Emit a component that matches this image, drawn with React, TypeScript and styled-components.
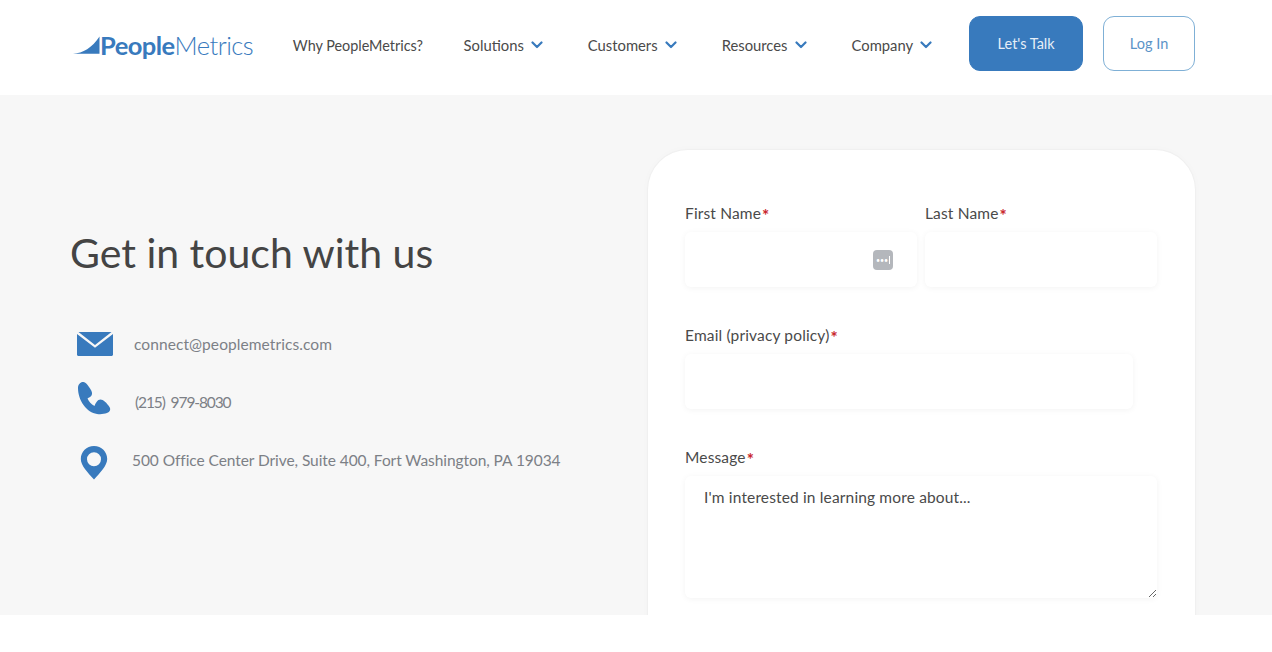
import React, { ReactElement } from 'react';
import styled, { createGlobalStyle } from 'styled-components';

const BLUE = '#387ABD';

const GlobalStyle = createGlobalStyle`
  html, body {
    margin: 0;
    padding: 0;
    background: #fff;
    font-family: 'Lato', 'Noto Sans', sans-serif;
  }
  * {
    box-sizing: border-box;
  }
`;

const navItems = [
  { label: 'Why PeopleMetrics?', hasMenu: false },
  { label: 'Solutions', hasMenu: true },
  { label: 'Customers', hasMenu: true },
  { label: 'Resources', hasMenu: true },
  { label: 'Company', hasMenu: true },
];

const LogoMark = (): ReactElement => (
  <svg width='28' height='20' viewBox='0 0 28 20'>
    <path d='M0 18.8C10 18 19 13 26.5 1.5V18.8Z' fill={BLUE} />
  </svg>
);

const Chevron = (): ReactElement => (
  <svg width='12' height='8' viewBox='0 0 12 8'>
    <path
      d='M1.5 1.5L6 6L10.5 1.5'
      fill='none'
      stroke={BLUE}
      strokeWidth='2.2'
      strokeLinecap='round'
      strokeLinejoin='round'
    />
  </svg>
);

const MailIcon = (): ReactElement => (
  <svg width='36' height='24' viewBox='0 0 36 24'>
    <path
      d='M1.5 0H34.5L18 13ZM0 2V22.5C0 23.4.7 24 1.5 24H34.5C35.3 24 36 23.4 36 22.5V2L18 15.8Z'
      fill={BLUE}
    />
  </svg>
);

const PhoneIcon = (): ReactElement => (
  <svg width='34' height='34' viewBox='0 0 34 34'>
    <path
      d='M1 7C1 3 4 .5 6.5 1C8.5 1.4 10 3 12 6C14.5 9.5 16 12 14.5 14.5C13.5 16 12 16.5 10.5 17.5C12 20.5 14 23 17.5 25C18.5 22 20.5 18.5 23.5 18.5C26 18.5 30 22 32.5 26C34 28.5 33 31 30 32C27 33 24 33.5 20 33C10 31.5 1 20 1 7Z'
      fill={BLUE}
    />
  </svg>
);

const PinIcon = (): ReactElement => (
  <svg width='28' height='34' viewBox='0 0 28 34'>
    <path
      fillRule='evenodd'
      d='M14 0C6.4 0 .8 5.8.8 13C.8 19.5 8 27 14 33.5C20 27 27.2 19.5 27.2 13C27.2 5.8 21.6 0 14 0ZM14 6.2A7 7 0 1 1 14 20.2A7 7 0 1 1 14 6.2Z'
      fill={BLUE}
    />
  </svg>
);

export default function App(): ReactElement {
  return (
    <Page>
      <GlobalStyle />
      <Header>
        <Logo>
          <LogoMark />
          <LogoBold>People</LogoBold>
          <LogoLight>Metrics</LogoLight>
        </Logo>
        <Nav>
          {navItems.map((item) => (
            <NavItem key={item.label} $hasMenu={item.hasMenu}>
              {item.label}
              {item.hasMenu && <Chevron />}
            </NavItem>
          ))}
        </Nav>
        <PrimaryButton>Let's Talk</PrimaryButton>
        <OutlineButton>Log In</OutlineButton>
      </Header>

      <Main>
        <ContactColumn>
          <Title>Get in touch with us</Title>
          <ContactList>
            <ContactRow>
              <IconSlot>
                <MailIcon />
              </IconSlot>
              <ContactText $indent={2} $spacing={0.08}>
                connect@peoplemetrics.com
              </ContactText>
            </ContactRow>
            <ContactRow>
              <IconSlot $up={8}>
                <PhoneIcon />
              </IconSlot>
              <ContactText $indent={3} $spacing={-1.1} $wordSpacing={3}>
                (215) 979-8030
              </ContactText>
            </ContactRow>
            <ContactRow>
              <IconSlot $left={3} $down={6}>
                <PinIcon />
              </IconSlot>
              <ContactText $spacing={-0.07}>
                500 Office Center Drive, Suite 400, Fort Washington, PA 19034
              </ContactText>
            </ContactRow>
          </ContactList>
        </ContactColumn>

        <FormCard>
          <NameRow>
            <Field>
              <Label>
                First Name<Required>*</Required>
              </Label>
              <InputBox>
                <PasswordBadge>
                  <span>•••</span>
                  <i />
                </PasswordBadge>
              </InputBox>
            </Field>
            <Field>
              <Label>
                Last Name<Required>*</Required>
              </Label>
              <InputBox />
            </Field>
          </NameRow>
          <Field>
            <Label>
              Email (privacy policy)<Required>*</Required>
            </Label>
            <InputBox $width={448} />
          </Field>
          <Field>
            <Label>
              Message<Required>*</Required>
            </Label>
            <MessageBox defaultValue="I'm interested in learning more about..." />
          </Field>
        </FormCard>
      </Main>
    </Page>
  );
}

const Page = styled.div`
  width: 1272px;
  height: 652px;
  overflow: hidden;
  background: #fff;
`;

const Header = styled.header`
  height: 95px;
  display: flex;
  align-items: center;
  padding: 0 77px 5px 73px;
  background: #fff;
`;

const Logo = styled.div`
  width: 220px;
  display: flex;
  align-items: baseline;
  font-size: 25.5px;
  line-height: 30px;
  letter-spacing: -0.55px;
  color: ${BLUE};

  svg {
    margin-right: -1px;
    flex: none;
    align-self: center;
  }
`;

const LogoBold = styled.span`
  font-weight: 700;
`;

const LogoLight = styled.span`
  font-weight: 300;
`;

const Nav = styled.nav`
  display: flex;
  align-items: center;
  gap: 45px;
  margin-right: 37px;
`;

const NavItem = styled.a<{ $hasMenu: boolean }>`
  display: flex;
  align-items: center;
  gap: ${(props) => (props.$hasMenu ? '7px' : '0')};
  margin-right: ${(props) => (props.$hasMenu ? '0' : '-4.5px')};
  font-size: ${(props) => (props.$hasMenu ? '14.8px' : '14.4px')};
  color: #4a4a4a;
  white-space: nowrap;
`;

const PrimaryButton = styled.button`
  width: 114px;
  height: 55px;
  margin: 0 20px 3px 0;
  border: 1px solid ${BLUE};
  border-radius: 11px;
  background: ${BLUE};
  color: #e6eef7;
  font: 400 14.5px 'Lato', sans-serif;
`;

const OutlineButton = styled.button`
  width: 92px;
  height: 55px;
  margin-bottom: 3px;
  border: 1px solid #7fb0d6;
  border-radius: 11px;
  background: #fff;
  color: #5b94c8;
  font: 400 14.5px 'Lato', sans-serif;
`;

const Main = styled.main`
  height: 520px;
  overflow: hidden;
  display: flex;
  justify-content: space-between;
  align-items: flex-start;
  padding: 55px 77px 0 70px;
  background: #f7f7f7;
`;

const ContactColumn = styled.section`
  padding-top: 78px;
`;

const Title = styled.h1`
  margin: 0 0 48px;
  font-size: 41px;
  line-height: 50px;
  font-weight: 400;
  color: #444;
`;

const ContactList = styled.div`
  display: flex;
  flex-direction: column;
  gap: 22px;
`;

const ContactRow = styled.div`
  display: flex;
  align-items: center;
  height: 36px;
`;

const IconSlot = styled.span<{ $left?: number; $up?: number; $down?: number }>`
  width: 62px;
  padding-left: ${(props) => 7 + (props.$left ?? 0)}px;
  margin-bottom: ${(props) => props.$up ?? 0}px;
  margin-top: ${(props) => props.$down ?? 0}px;
  display: flex;
  align-items: center;
  flex: none;
`;

const ContactText = styled.span<{
  $indent?: number;
  $spacing?: number;
  $wordSpacing?: number;
}>`
  margin-left: ${(props) => props.$indent ?? 0}px;
  font-size: 15.5px;
  letter-spacing: ${(props) => props.$spacing ?? 0}px;
  word-spacing: ${(props) => props.$wordSpacing ?? 0}px;
  color: #7c8086;
  white-space: nowrap;
`;

const FormCard = styled.section`
  width: 547px;
  height: 560px;
  flex: none;
  padding: 53px 37px 0;
  display: flex;
  flex-direction: column;
  gap: 38px;
  border-radius: 40px;
  background: #fff;
  box-shadow: 0 0 0 1px #f0f0f0, 0 0 8px rgba(0, 0, 0, 0.025);
`;

const NameRow = styled.div`
  display: grid;
  grid-template-columns: 232px 232px;
  gap: 8px;
`;

const Field = styled.div`
  display: flex;
  flex-direction: column;
`;

const Label = styled.label`
  height: 20px;
  margin-bottom: 9px;
  font-size: 15.5px;
  line-height: 20px;
  letter-spacing: 0.15px;
  color: #4a4a4a;
`;

const Required = styled.span`
  margin-left: 1px;
  color: #c9252c;
  font-size: 17px;
  font-weight: 700;
  line-height: 0;
  vertical-align: -3px;
`;

const InputBox = styled.div<{ $width?: number }>`
  width: ${(props) => (props.$width ? `${props.$width}px` : '100%')};
  height: 55px;
  position: relative;
  border-radius: 6px;
  background: #fff;
  box-shadow: 0 1px 6px rgba(0, 0, 0, 0.05);
`;

const PasswordBadge = styled.span`
  position: absolute;
  top: 18px;
  right: 24px;
  width: 20px;
  height: 20px;
  display: flex;
  align-items: center;
  justify-content: center;
  gap: 1px;
  border-radius: 4px;
  background: #b4b7bc;
  color: #fff;
  font-size: 7px;
  line-height: 20px;
  letter-spacing: 0;

  i {
    width: 1px;
    height: 8px;
    background: #fff;
  }
`;

const MessageBox = styled.textarea`
  width: 472px;
  height: 122px;
  padding: 11px 19px;
  border: 0;
  outline: 0;
  border-radius: 6px;
  background: #fff;
  box-shadow: 0 1px 6px rgba(0, 0, 0, 0.05);
  font: 400 15.5px/20px 'Lato', sans-serif;
  letter-spacing: 0.15px;
  color: #4a4a4a;
  resize: vertical;
`;
